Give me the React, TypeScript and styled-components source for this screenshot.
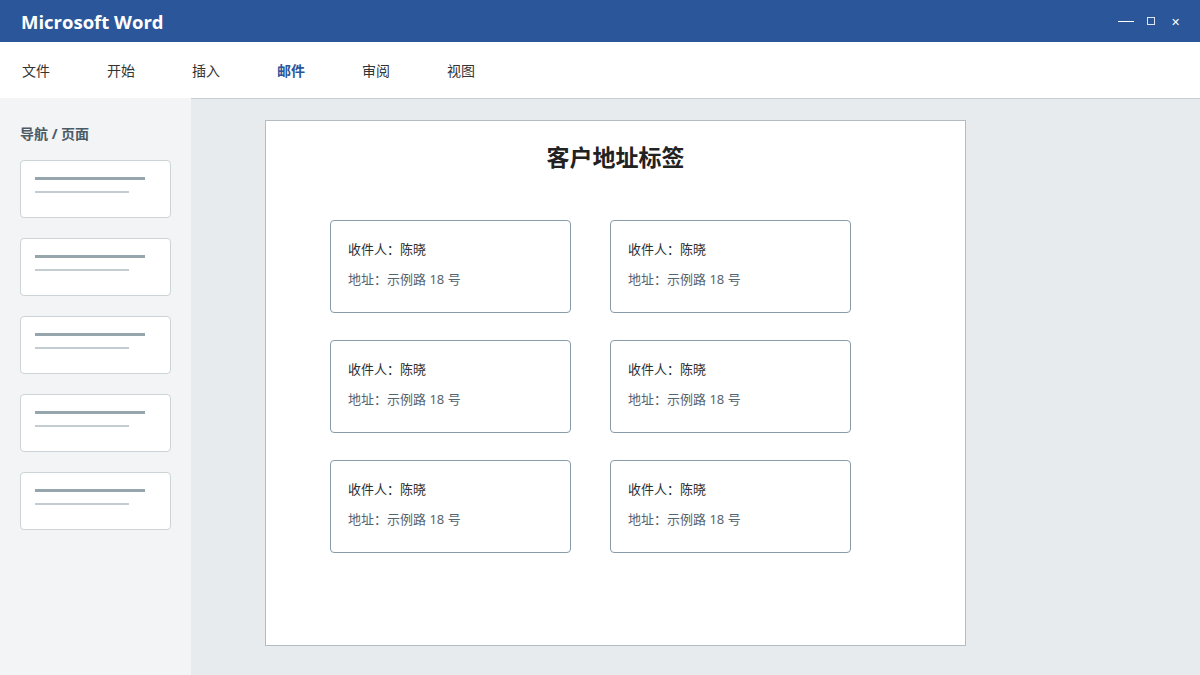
import React from "react";
import styled, { createGlobalStyle } from "styled-components";

const GlobalStyle = createGlobalStyle`
  html, body {
    margin: 0;
    padding: 0;
    width: 1200px;
    height: 675px;
    overflow: hidden;
    font-family: "Noto Sans", "Noto Sans CJK SC", sans-serif;
  }
  * { box-sizing: border-box; }
`;

const menus = ["文件", "开始", "插入", "邮件", "审阅", "视图"];
const labels = Array.from({ length: 6 }, () => ({ name: "陈晓", addr: "示例路 18 号" }));

export default function App() {
  return (
    <>
      <GlobalStyle />
      <Window>
        <TitleBar>
          <AppName>Microsoft Word</AppName>
          <Controls>
            <MinBtn />
            <MaxBtn />
            <CloseBtn>✕</CloseBtn>
          </Controls>
        </TitleBar>
        <MenuBar>
          {menus.map((m) => (
            <MenuItem key={m} $active={m === "邮件"}>
              {m}
            </MenuItem>
          ))}
        </MenuBar>
        <Body>
          <Sidebar>
            <SideTitle>导航 / 页面</SideTitle>
            {[0, 1, 2, 3, 4].map((i) => (
              <Thumb key={i}>
                <ThumbLine $w={110} $h={3} $c="#97a5ad" />
                <ThumbLine $w={94} $h={2} $c="#c3cdd1" />
              </Thumb>
            ))}
          </Sidebar>
          <Workspace>
            <Page>
              <PageTitle>客户地址标签</PageTitle>
              <LabelGrid>
                {labels.map((l, i) => (
                  <Label key={i}>
                    <Recipient>收件人：{l.name}</Recipient>
                    <Address>地址：{l.addr}</Address>
                  </Label>
                ))}
              </LabelGrid>
            </Page>
          </Workspace>
        </Body>
      </Window>
    </>
  );
}

const Window = styled.div`
  width: 1200px;
  height: 675px;
  display: flex;
  flex-direction: column;
`;

const TitleBar = styled.div`
  height: 42px;
  background: #2b579a;
  display: flex;
  align-items: center;
  justify-content: space-between;
  padding: 0 21px;
`;

const AppName = styled.div`
  color: #fff;
  font-weight: 700;
  font-size: 18.5px;
  font-family: "Open Sans", "Noto Sans", sans-serif;
`;

const Controls = styled.div`
  display: flex;
  align-items: center;
  gap: 13px;
  color: #fff;
`;

const MinBtn = styled.span`
  display: block;
  width: 16px;
  height: 1px;
  background: #fff;
`;

const MaxBtn = styled.span`
  display: block;
  width: 8px;
  height: 8px;
  border: 1px solid #dfe6f0;
`;

const CloseBtn = styled.span`
  font-size: 11px;
  line-height: 1;
  margin-left: 3px;
  margin-right: -1px;
`;

const MenuBar = styled.div`
  height: 56px;
  background: #fff;
  display: flex;
  align-items: center;
  padding-left: 22px;
`;

const MenuItem = styled.div<{ $active?: boolean }>`
  width: 85px;
  font-size: 14px;
  color: ${(p) => (p.$active ? "#2b579a" : "#333")};
  font-weight: ${(p) => (p.$active ? 700 : 400)};
`;

const Body = styled.div`
  flex: 1;
  display: flex;
  min-height: 0;
`;

const Sidebar = styled.div`
  width: 191px;
  background: #f3f4f6;
  padding: 26px 20px 0 20px;
  display: flex;
  flex-direction: column;
  gap: 20px;
`;

const SideTitle = styled.div`
  font-size: 14px;
  font-weight: 700;
  color: #4b5a64;
  line-height: 20px;
  margin-bottom: -4px;
`;

const Thumb = styled.div`
  width: 151px;
  height: 58px;
  flex-shrink: 0;
  background: #fff;
  border: 1px solid #ccd4d8;
  border-radius: 4px;
  padding: 16px 0 0 14px;
  display: flex;
  flex-direction: column;
  gap: 11px;
`;

const ThumbLine = styled.div<{ $w: number; $h: number; $c: string }>`
  width: ${(p) => p.$w}px;
  height: ${(p) => p.$h}px;
  background: ${(p) => p.$c};
`;

const Workspace = styled.div`
  flex: 1;
  background: #e7ebee;
  border-top: 1px solid #c8ced3;
  padding: 21px 0 0 74px;
`;

const Page = styled.div`
  width: 701px;
  height: 526px;
  background: #fff;
  border: 1px solid #b3bcc3;
  padding: 20px 0 0 64px;
`;

const PageTitle = styled.h1`
  margin: 0 0 47px -64px;
  text-align: center;
  font-size: 23px;
  line-height: 32px;
  font-weight: 700;
  color: #222;
`;

const LabelGrid = styled.div`
  display: grid;
  grid-template-columns: 241px 241px;
  column-gap: 39px;
  row-gap: 27px;
`;

const Label = styled.div`
  height: 93px;
  border: 1px solid #8a9ca8;
  border-radius: 4px;
  padding: 18px 0 0 17px;
  display: flex;
  flex-direction: column;
  gap: 10px;
`;

const Recipient = styled.div`
  font-size: 13px;
  line-height: 20px;
  color: #2a2f33;
`;

const Address = styled.div`
  font-size: 13px;
  line-height: 20px;
  color: #55656f;
`;
